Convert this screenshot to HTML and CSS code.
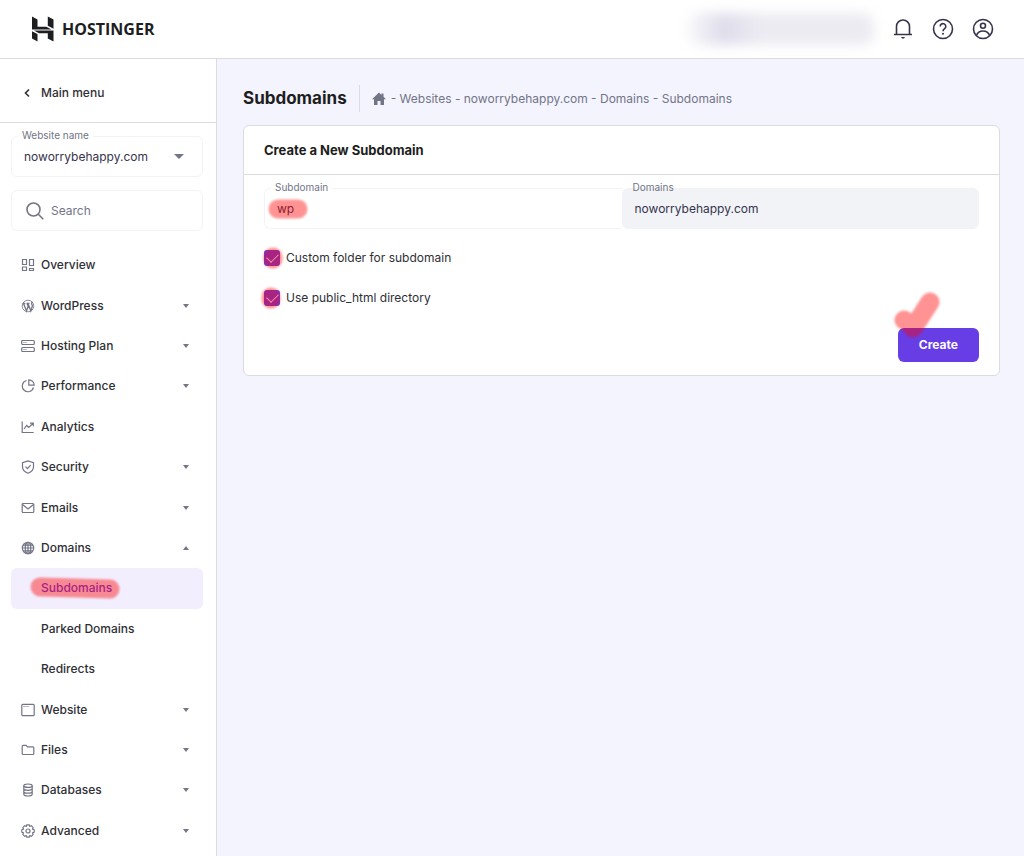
FILE: index.html
```html
<!DOCTYPE html>
<html lang="en">
    <head>
        <meta charset="UTF-8">
        <meta name="viewport" content="width=device-width, initial-scale=1">
        <title>Subdomains</title>
        <link rel="stylesheet" href="styles.css">
    </head>
    <body>

        <header class="topbar">
            <a class="logo" href="#">
                <svg width="22" height="26" viewBox="0 0 22 26" fill="currentColor">
                    <path d="M0 .5l5.500 3v7.300h8.700l5.300 2.700H0zM15.800.5l5.700 3v9.300l-5.700-3zM2 14.500h19.500v11l-5.700-3v-5.300H7zM0 15.300l5.500 2.800v7.400l-5.500-3z"/>
                </svg>
                <span>HOSTINGER</span>
            </a>
            <div class="topbar-right">
                <div class="account-blur"></div>
                <button class="icon-button" aria-label="Notifications">
                    <svg class="icon" width="22" height="22" viewBox="0 0 22 22">
                        <path d="M4.500 16.500V8.500a6.500 6.500 0 0 1 13 0v8M2 16.500h18"/>
                        <path d="M9 19h4l-1 1.500h-2z" fill="currentColor" stroke="none"/>
                    </svg>
                </button>
                <button class="icon-button" aria-label="Help">
                    <svg class="icon" width="22" height="22" viewBox="0 0 22 22">
                        <circle cx="11" cy="11" r="9.500"/>
                        <path d="M8.200 8.500a2.800 2.800 0 1 1 4.400 2.200c-1 .7-1.600 1.200-1.600 2.500"/>
                        <circle cx="11" cy="15.800" r="1" fill="currentColor" stroke="none"/>
                    </svg>
                </button>
                <button class="icon-button" aria-label="Profile">
                    <svg class="icon" width="22" height="22" viewBox="0 0 22 22">
                        <circle cx="11" cy="11" r="9.500"/>
                        <circle cx="11" cy="7.800" r="2.500"/>
                        <path d="M4.500 17.500c1-3 3.500-4.500 6.500-4.500s5.500 1.500 6.500 4.500"/>
                    </svg>
                </button>
            </div>
        </header>

        <div class="layout">
            <aside class="sidebar">
                <a class="back" href="#">
                    <svg class="icon" width="14" height="14" viewBox="0 0 14 14"><path d="M9 3.500L5.500 7 9 10.500"/></svg>
                    Main menu
                </a>

                <div class="filters">
                    <div class="field">
                        <label for="site">Website name</label>
                        <select id="site"><option>noworrybehappy.com</option></select>
                        <span class="arrow big"></span>
                    </div>
                    <div class="field search">
                        <svg class="icon" width="18" height="18" viewBox="0 0 18 18"><circle cx="7.500" cy="7.500" r="6.500"/><path d="M12.300 12.300l5 5"/></svg>
                        <input type="search" placeholder="Search" aria-label="Search">
                    </div>
                </div>

                <nav class="menu">
                    <a href="#">
                        <svg class="icon" width="14" height="14" viewBox="0 0 14 14"><path d="M1.500 1.500h4v5h-4zM8.500 1.500h4v6h-4zM1.500 9h4v3.500h-4zM8.500 10.500h4v2h-4z"/></svg>
                        Overview
                    </a>
                    <a href="#">
                        <svg class="icon" width="14" height="14" viewBox="0 0 14 14"><circle cx="7" cy="7" r="5.800" stroke-width=".8"/><path d="M1.800 4.500h2.500M2.500 4.500l3 7.500 1.700-4.700-1.200-2.800M5.500 4.500h3M7 4.500l2.800 7.500 1.500-4.700c.4-1.300-.7-1.900-.7-2.900s.6-1.200 1-1.200" stroke-width="1.300"/></svg>
                        WordPress<span class="arrow"></span>
                    </a>
                    <a href="#">
                        <svg class="icon" width="14" height="14" viewBox="0 0 14 14"><rect x=".7" y="1.500" width="12.600" height="4" rx="1"/><rect x=".7" y="8.500" width="12.600" height="4" rx="1"/><path d="M2.500 3.500h1M4.500 3.500h1M2.500 10.500h1M4.500 10.500h1" stroke-width="1"/></svg>
                        Hosting Plan<span class="arrow"></span>
                    </a>
                    <a href="#">
                        <svg class="icon" width="14" height="14" viewBox="0 0 14 14"><path d="M5.500 1.500a5.700 5.700 0 1 0 7 7"/><path d="M7.800.8v5.400h5.400A5.500 5.500 0 0 0 7.800.8z"/></svg>
                        Performance<span class="arrow"></span>
                    </a>
                    <a href="#">
                        <svg class="icon" width="14" height="14" viewBox="0 0 14 14"><path d="M1.200 1.500v11h11.500M3 9l2.700-3.500 2 2L12 3.500M9 3.200h3.300v3"/></svg>
                        Analytics
                    </a>
                    <a href="#">
                        <svg class="icon" width="14" height="14" viewBox="0 0 14 14"><path d="M7 .9L1.500 2.800v4c0 3 2.300 5.300 5.500 6.500 3.200-1.200 5.500-3.500 5.500-6.500v-4z"/><path d="M4.500 6.700l1.900 1.900 3.300-3.400"/></svg>
                        Security<span class="arrow"></span>
                    </a>
                    <a href="#">
                        <svg class="icon" width="14" height="14" viewBox="0 0 14 14"><rect x="1.200" y="2.500" width="11.600" height="9" rx="1"/><path d="M1.500 3.500L7 8l5.500-4.500"/></svg>
                        Emails<span class="arrow"></span>
                    </a>
                    <a href="#">
                        <svg class="icon" width="14" height="14" viewBox="0 0 14 14"><circle cx="7" cy="7" r="5.700"/><ellipse cx="7" cy="7" rx="2.800" ry="5.700"/><path d="M7 1.300v11.400M1.300 7h11.400M2 4.200h10M2 9.800h10"/></svg>
                        Domains<span class="arrow up"></span>
                    </a>
                    <a class="sub active" href="#">
                        Subdomains
                        <svg class="marker mark-menu" width="100" height="32" viewBox="0 0 100 32"><path d="M15 15l20 .5 50 1.500"/></svg>
                    </a>
                    <a class="sub" href="#">Parked Domains</a>
                    <a class="sub" href="#">Redirects</a>
                    <a href="#">
                        <svg class="icon" width="14" height="14" viewBox="0 0 14 14"><rect x=".8" y="1.300" width="12.400" height="11.400" rx="1"/><path d="M2.500 3.500h1M4.500 3.500h1M6.500 3.500h1" stroke-width="1"/></svg>
                        Website<span class="arrow"></span>
                    </a>
                    <a href="#">
                        <svg class="icon" width="14" height="14" viewBox="0 0 14 14"><path d="M1.200 3.300c0-.6.300-.9.900-.9h3l1.500 1.500h5.300c.6 0 .9.300.9.900v5.800c0 .6-.3.900-.9.900H2.100c-.6 0-.9-.3-.9-.9z"/></svg>
                        Files<span class="arrow"></span>
                    </a>
                    <a href="#">
                        <svg class="icon" width="14" height="14" viewBox="0 0 14 14"><ellipse cx="7" cy="2.700" rx="4.200" ry="1.700"/><path d="M2.800 2.700v8.600c0 1 1.900 1.700 4.200 1.700s4.200-.7 4.200-1.700V2.700M2.800 5.600c0 1 1.900 1.700 4.200 1.700s4.200-.7 4.200-1.700M2.800 8.500c0 1 1.900 1.700 4.200 1.700s4.200-.7 4.200-1.700"/></svg>
                        Databases<span class="arrow"></span>
                    </a>
                    <a href="#">
                        <svg class="icon" width="14" height="14" viewBox="0 0 14 14"><path d="M5.800.8h2.400l.5 1.600 1.600-.7 1.900 1.900-.7 1.600 1.700.6v2.400l-1.700.6.7 1.600-1.900 1.900-1.600-.7-.5 1.600H5.800l-.5-1.600-1.600.7-1.900-1.900.7-1.600-1.700-.6V5.800l1.700-.6-.7-1.600 1.900-1.900 1.600.7z" stroke-linejoin="round"/><circle cx="7" cy="7" r="2"/></svg>
                        Advanced<span class="arrow"></span>
                    </a>
                </nav>
            </aside>

            <main class="content">
                <div class="page-head">
                    <h1>Subdomains</h1>
                    <div class="breadcrumb">
                        <svg width="14" height="14" viewBox="0 0 14 14" fill="currentColor"><path d="M7 .5L0 7.200h2V13h3.500V9h3v4H12V7.200h2l-2.500-2.400V1.500h-2v1.400z"/></svg>
                        <span>- Websites - noworrybehappy.com - Domains - Subdomains</span>
                    </div>
                </div>

                <form class="card">
                    <h2>Create a New Subdomain</h2>
                    <div class="card-body">
                        <div class="row">
                            <div class="field joined">
                                <label for="sub">Subdomain</label>
                                <input id="sub" type="text" value="wp">
                                <svg class="marker mark-wp" width="52" height="32" viewBox="0 0 52 32"><path d="M16 16h20"/></svg>
                            </div>
                            <div class="field filled">
                                <label for="domain">Domains</label>
                                <input id="domain" type="text" value="noworrybehappy.com" readonly>
                            </div>
                        </div>
                        <label class="check">
                            <input type="checkbox" checked>
                            Custom folder for subdomain
                            <svg class="marker mark-check" width="32" height="32" viewBox="0 0 32 32"><path d="M17 15v2"/></svg>
                        </label>
                        <label class="check">
                            <input type="checkbox" checked>
                            Use public_html directory
                            <svg class="marker mark-check" width="32" height="32" viewBox="0 0 32 32"><path d="M15 15v2"/></svg>
                        </label>
                        <div class="actions">
                            <button class="create" type="button">Create</button>
                            <svg class="marker mark-tick" width="64" height="60" viewBox="0 0 64 60"><path d="M19 34q7 3 9 8 3-4 8-12l9-14" stroke-linejoin="round"/></svg>
                        </div>
                    </div>
                </form>
            </main>
        </div>

    </body>
</html>
```
FILE: styles.css
```css
* {box-sizing: border-box;}
body {
    margin: 0;
    min-height: 100vh;
    display: flex;
    flex-direction: column;
    background: #f4f4ff;
    color: #2f2f36;
    font: 500 12px/16px Inter, "Liberation Sans", sans-serif;
}
a {color: inherit; text-decoration: none;}
button, input, select {font: inherit; color: inherit;}
.icon {
    flex: none;
    fill: none;
    stroke: currentColor;
    stroke-width: 1.2;
}

/* top bar */
.topbar {
    height: 59px;
    padding: 0 30px 0 32px;
    display: flex;
    align-items: center;
    justify-content: space-between;
    background: #fff;
    border-bottom: 1px solid #dadce0;
}
.logo {
    display: flex;
    align-items: center;
    gap: 8px;
    color: #1d1e20;
    font: bold 16px/20px "Open Sans", sans-serif;
}
.topbar-right {
    display: flex;
    align-items: center;
    gap: 18px;
    color: #36344d;
}
.account-blur {
    width: 188px;
    height: 32px;
    border-radius: 12px;
    background: linear-gradient(90deg, #fafafc, #dfdcea 20%, #ecebf2 40%, #ecebf2);
    filter: blur(6px);
}
.icon-button {
    display: flex;
    padding: 0;
    border: 0;
    background: none;
}
.icon-button .icon {stroke-width: 1.6;}

.layout {
    flex: 1;
    display: flex;
}

/* sidebar */
.sidebar {
    flex: none;
    width: 217px;
    display: flex;
    flex-direction: column;
    background: #fff;
    border-right: 1px solid #dadce0;
}
.back {
    height: 64px;
    padding: 4px 20px 0;
    display: flex;
    align-items: center;
    gap: 7px;
    border-bottom: 1px solid #dadce0;
}
.back .icon {stroke-width: 1.6;}
.filters {
    padding: 13px 13px 14px 11px;
    display: grid;
    gap: 13px;
}
.field {
    position: relative;
    height: 41px;
    display: flex;
    align-items: center;
    border: 1px solid #f2f3f6;
    border-radius: 6px;
    color: #36344d;
    font-weight: 400;
}
.field label {
    position: absolute;
    top: -10px;
    left: 6px;
    padding: 0 4px;
    background: #fff;
    color: #727586;
    font-size: 10px;
}
.field input, .field select {
    width: 100%;
    height: 100%;
    padding: 0 12px;
    border: 0;
    outline: 0;
    background: none;
    appearance: none;
}
.search {
    padding-left: 14px;
    color: #727586;
}
.search .icon {stroke-width: 1.6;}
.search input {padding: 0 7px;}
.search input::placeholder {color: #727586;}
.arrow {
    margin-left: auto;
    margin-right: 1px;
    border: solid transparent;
    border-width: 4px 3px 0;
    border-top-color: #727586;
}
.arrow.up {
    border-width: 0 3px 4px;
    border-bottom-color: #727586;
}
.arrow.big {
    position: absolute;
    right: 17px;
    border-width: 5px 5px 0;
    pointer-events: none;
}

.menu {
    flex: 1;
    margin: 0 13px 5px 11px;
    display: flex;
    flex-direction: column;
}
.menu a {
    flex: 1;
    min-height: 40px;
    padding: 0 13px 0 10px;
    display: flex;
    align-items: center;
    gap: 6px;
    border-radius: 6px;
}
.menu .icon {color: #727586;}
.menu .sub {
    position: relative;
    padding-left: 30px;
}
.menu .active {
    background: #f2eefe;
    color: #673de6;
}

/* content */
.content {
    flex: 1;
    min-width: 0;
    padding: 26px 24px 26px 26px;
}
.page-head {
    display: flex;
    align-items: center;
    margin-bottom: 13px;
}
h1, h2 {margin: 0; color: #1d1e20;}
h1 {
    padding-right: 12px;
    font-size: 17px;
    line-height: 27px;
}
.breadcrumb {
    height: 27px;
    padding-left: 12px;
    display: flex;
    align-items: center;
    gap: 5px;
    border-left: 1px solid #dadce0;
    color: #727586;
    font-weight: 400;
}
.card {
    background: #fff;
    border: 1px solid #dadce0;
    border-radius: 6px;
}
h2 {
    padding: 14px 20px;
    border-bottom: 1px solid #dadce0;
    font-size: 13px;
    line-height: 20px;
}
.card-body {padding: 13px 20px;}
.row {
    display: grid;
    grid-template-columns: 1fr 1fr;
    margin-bottom: 19px;
}
.joined {
    border-right: 0;
    border-radius: 6px 0 0 6px;
}
.filled {
    background: #f2f3f6;
}
.filled label {background: none;}
.check {
    position: relative;
    height: 20px;
    margin-bottom: 20px;
    display: flex;
    align-items: center;
    gap: 6px;
    font-weight: 400;
}
.check input {
    width: 16px;
    height: 16px;
    margin: 0;
    display: flex;
    justify-content: center;
    appearance: none;
    border-radius: 3px;
    background: #673de6;
}
.check input::after {
    content: "";
    width: 6px;
    height: 10px;
    margin-top: 1px;
    border: solid #fff;
    border-width: 0 1px 1px 0;
    transform: rotate(45deg);
}
.actions {
    position: relative;
    display: flex;
    justify-content: flex-end;
}
.create {
    padding: 9px 21px;
    border: 0;
    border-radius: 6px;
    background: #673de6;
    color: #fff;
    font-weight: 700;
}

/* red highlighter strokes over the content */
.marker {
    position: absolute;
    overflow: visible;
    fill: none;
    stroke: #f00;
    stroke-width: 19;
    stroke-linecap: round;
    opacity: .42;
    filter: blur(1px);
    pointer-events: none;
}
.mark-menu {left: 14px; top: 4px;}
.mark-wp {left: -3px; top: 4px;}
.mark-check {left: -8px; top: -6px;}
.mark-tick {right: 30px; top: -42px;}
```
